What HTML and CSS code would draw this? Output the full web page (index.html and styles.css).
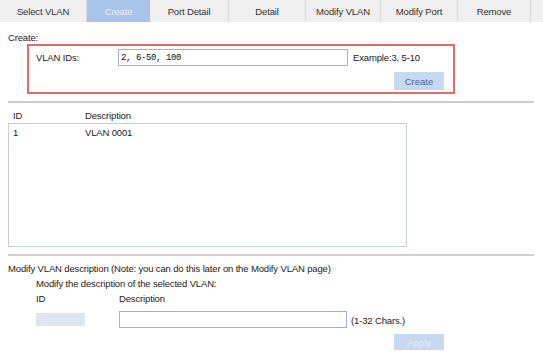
FILE: index.html
```html
<!DOCTYPE html>
<html lang="en">
<head>
    <meta charset="UTF-8">
    <meta name="viewport" content="width=device-width, initial-scale=1.0">
    <title>VLAN</title>
    <link rel="stylesheet" href="styles.css">
</head>
<body>
    <div class="tabs">
        <div class="tab t1">Select VLAN</div>
        <div class="tab t2 active">Create</div>
        <div class="tab t3">Port Detail</div>
        <div class="tab t4">Detail</div>
        <div class="tab t5">Modify VLAN</div>
        <div class="tab t6">Modify Port</div>
        <div class="tab t7">Remove</div>
        <div class="tab rest"></div>
    </div>

    <div class="content">
        <div class="title">Create:</div>
        <div class="create-box">
            <div class="row">
                <span class="label">VLAN IDs:</span>
                <input type="text" class="ids" value="2, 6-50, 100">
                <span class="hint">Example:3, 5-10</span>
            </div>
            <div class="btn-row">
                <button class="btn">Create</button>
            </div>
        </div>

        <div class="line"></div>

        <div class="list-head">
            <span class="col-id">ID</span>
            <span>Description</span>
        </div>
        <div class="list">
            <div class="list-row">
                <span class="col-id">1</span>
                <span>VLAN 0001</span>
            </div>
        </div>

        <div class="line second"></div>

        <div class="text">Modify VLAN description (Note: you can do this later on the Modify VLAN page)</div>
        <div class="modify">
            <div class="text">Modify the description of the selected VLAN:</div>
            <div class="text">
                <span class="col-mid">ID</span>
                <span>Description</span>
            </div>
            <div class="desc-row">
                <span class="id-cell"></span>
                <input type="text" class="desc">
                <span class="chars">(1-32 Chars.)</span>
            </div>
        </div>
        <div class="btn-row apply-row">
            <button class="btn disabled">Apply</button>
        </div>
    </div>
</body>
</html>
```

FILE: styles.css
```css
body {
    margin: 0;
    font-family: "Liberation Sans", Arial, sans-serif;
    font-size: 9.5px;
    letter-spacing: -0.15px;
    color: #222;
    background-color: #fff;
}

/* Tabs */
.tabs {
    display: flex;
    height: 22px;
    background-color: #efefef;
}

.tab {
    display: flex;
    align-items: center;
    justify-content: center;
    border-right: 1px solid #d6d6d6;
    color: #333;
    box-sizing: border-box;
}

.t1 { width: 87px; }
.t2 { width: 63px; }
.t3 { width: 79px; }
.t4 { width: 77px; }
.t5 { width: 75px; }
.t6 { width: 77px; }
.t7 { width: 73px; }
.rest { flex: 1; border-right: none; }

.tab.active {
    background-color: #a9c4e8;
    color: #e6eef9;
    border-right: none;
}

/* Content */
.content {
    padding: 0 9px 0 8px;
}

.title {
    margin-top: 9px;
    height: 13px;
    line-height: 13px;
}

.create-box {
    margin-left: 19px;
    width: 428px;
    height: 50px;
    box-sizing: border-box;
    border: 2px solid #e36b6b;
    padding: 3px 9px 2px 7px;
}

.row {
    display: flex;
    align-items: center;
    height: 17px;
}

.label {
    width: 82px;
}

input[type="text"] {
    box-sizing: border-box;
    height: 17px;
    margin: 0;
    padding: 0 2px;
    border: 1px solid #9fb2c8;
    background-color: #fff;
    outline: none;
}

.ids {
    width: 230px;
    font-family: "Liberation Mono", monospace;
    font-size: 9px;
    letter-spacing: -0.4px;
    color: #111;
}

.hint {
    margin-left: 5px;
}

.btn-row {
    display: flex;
    justify-content: flex-end;
    margin-top: 6px;
}

.btn {
    width: 50px;
    height: 18px;
    border: none;
    padding: 0;
    background-color: #c6d9f1;
    color: #46679b;
    font-family: "Liberation Sans", Arial, sans-serif;
    font-size: 9.5px;
}

.btn.disabled {
    height: 16px;
    color: #e4ecf7;
}

.line {
    margin-top: 7px;
    width: 526px;
    height: 2px;
    background-color: #cfcfcf;
}

.list-head {
    display: flex;
    margin-top: 6px;
    height: 14px;
    line-height: 14px;
    padding-left: 5px;
}

.col-id {
    width: 72px;
}

.list {
    width: 399px;
    height: 124px;
    box-sizing: border-box;
    border: 1px solid #c3cde0;
    padding-top: 2px;
}

.list-row {
    display: flex;
    height: 14px;
    line-height: 14px;
    padding-left: 4px;
}

.line.second {
    margin-top: 7px;
}

.text {
    display: flex;
    height: 15px;
    line-height: 15px;
}

.line + .text {
    margin-top: 5px;
}

.modify {
    padding-left: 28px;
}

.col-mid {
    width: 83px;
}

.desc-row {
    display: flex;
    align-items: center;
    margin-top: 5px;
    height: 17px;
}

.id-cell {
    width: 49px;
    height: 13px;
    margin-right: 34px;
    background-color: #dfe6f1;
}

.desc {
    width: 228px;
}

.chars {
    margin-left: 4px;
    padding-top: 2px;
}

.apply-row {
    width: 436px;
}
```
